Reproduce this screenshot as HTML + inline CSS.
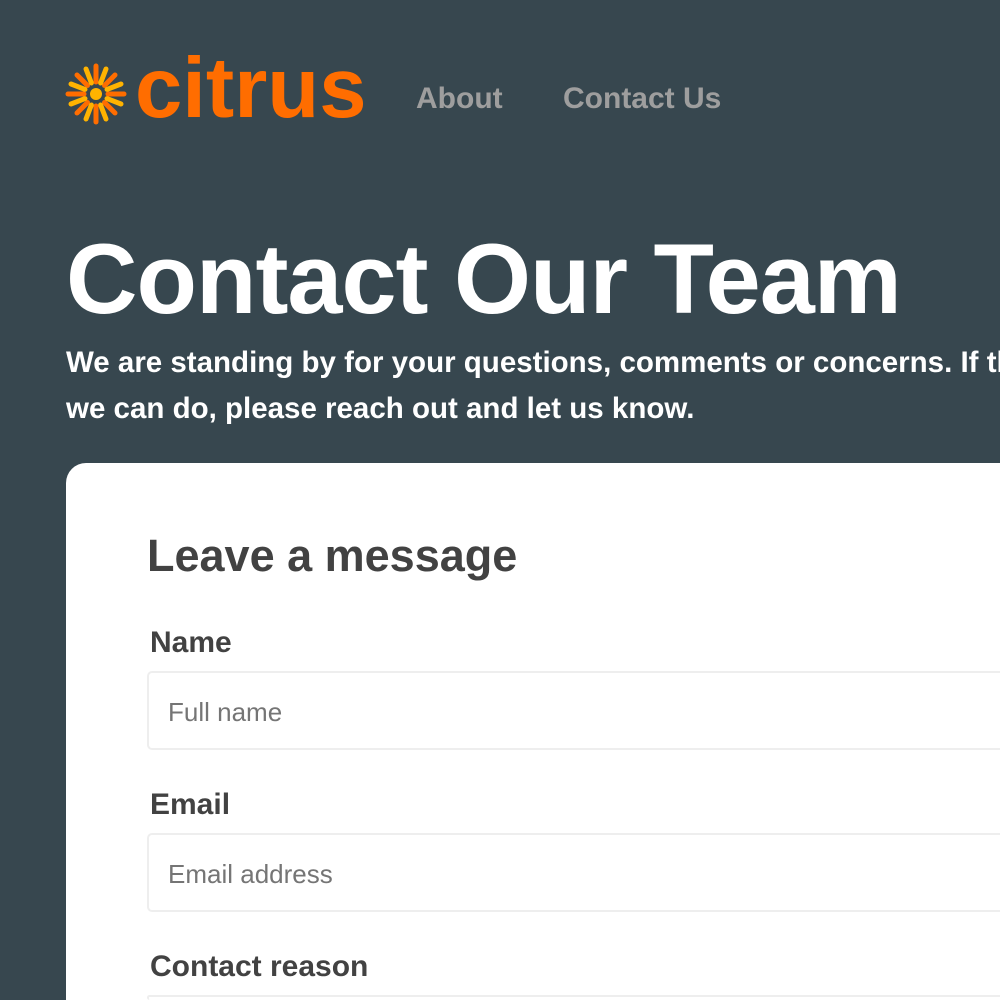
<!DOCTYPE html>
<html><head><meta charset="utf-8"><style>
*{margin:0;padding:0;box-sizing:border-box}
html,body{width:1000px;height:1000px;overflow:hidden}
body{background:#37474f;font-family:"Liberation Sans",sans-serif;position:relative}
.abs{position:absolute;white-space:nowrap}
.logo{left:135px;top:40px;font-size:85px;font-weight:bold;color:#ff6d00}
.nav{top:82px;font-size:30px;font-weight:bold;color:#9e9e9e}
h1{position:absolute;left:66px;top:222px;font-size:99px;color:#fff;white-space:nowrap;letter-spacing:-1px}
.p{left:66px;top:340px;width:934px;overflow:hidden;font-size:29.5px;font-weight:bold;color:#fff;line-height:46px}
.card{position:absolute;left:66px;top:463px;width:934px;height:537px;background:#fff;border-radius:20px 0 0 0}
.h2{left:147px;top:530px;font-size:45px;font-weight:bold;color:#424242}
.lbl{left:150px;font-size:30px;font-weight:bold;color:#424242}
.inp{position:absolute;left:147px;width:853px;height:79px;border:2px solid #eee;border-right:none;border-radius:5px 0 0 5px;background:#fff}
.ph{left:168px;font-size:26px;color:#757575}
</style></head><body>
<svg class="abs" style="left:62px;top:60px" width="68" height="68" viewBox="-34 -34 68 68">
<g stroke-linecap="round">
<g stroke="#ff6d00" stroke-width="5">
<line x1="0" y1="-12" x2="0" y2="-28"/><line x1="0" y1="12" x2="0" y2="28"/>
<line x1="-12" y1="0" x2="-28" y2="0"/><line x1="12" y1="0" x2="28" y2="0"/>
<line x1="8.5" y1="-8.5" x2="19" y2="-19"/><line x1="-8.5" y1="8.5" x2="-19" y2="19"/>
<line x1="-8.5" y1="-8.5" x2="-19" y2="-19"/><line x1="8.5" y1="8.5" x2="19" y2="19"/>
</g>
<g stroke="#ffb300" stroke-width="5">
<line x1="4.6" y1="-11" x2="10" y2="-25"/><line x1="-4.6" y1="11" x2="-10" y2="25"/>
<line x1="-4.6" y1="-11" x2="-10" y2="-25"/><line x1="4.6" y1="11" x2="10" y2="25"/>
<line x1="11" y1="-4.6" x2="25" y2="-10"/><line x1="-11" y1="4.6" x2="-25" y2="10"/>
<line x1="-11" y1="-4.6" x2="-25" y2="-10"/><line x1="11" y1="4.6" x2="25" y2="10"/>
</g></g>
<circle r="6" fill="#ffb300"/>
</svg>
<div class="abs logo">citrus</div>
<div class="abs nav" style="left:416px">About</div>
<div class="abs nav" style="left:563px">Contact Us</div>
<h1>Contact Our Team</h1>
<div class="abs p">We are standing by for your questions, comments or concerns. If there<br>we can do, please reach out and let us know.</div>
<div class="card"></div>
<div class="abs h2">Leave a message</div>
<div class="abs lbl" style="top:626px">Name</div>
<div class="inp" style="top:671px"></div>
<div class="abs ph" style="top:697px">Full name</div>
<div class="abs lbl" style="top:788px">Email</div>
<div class="inp" style="top:833px"></div>
<div class="abs ph" style="top:859px">Email address</div>
<div class="abs lbl" style="top:950px">Contact reason</div>
<div class="inp" style="top:995px;height:5px;border-bottom:none"></div>
</body></html>
